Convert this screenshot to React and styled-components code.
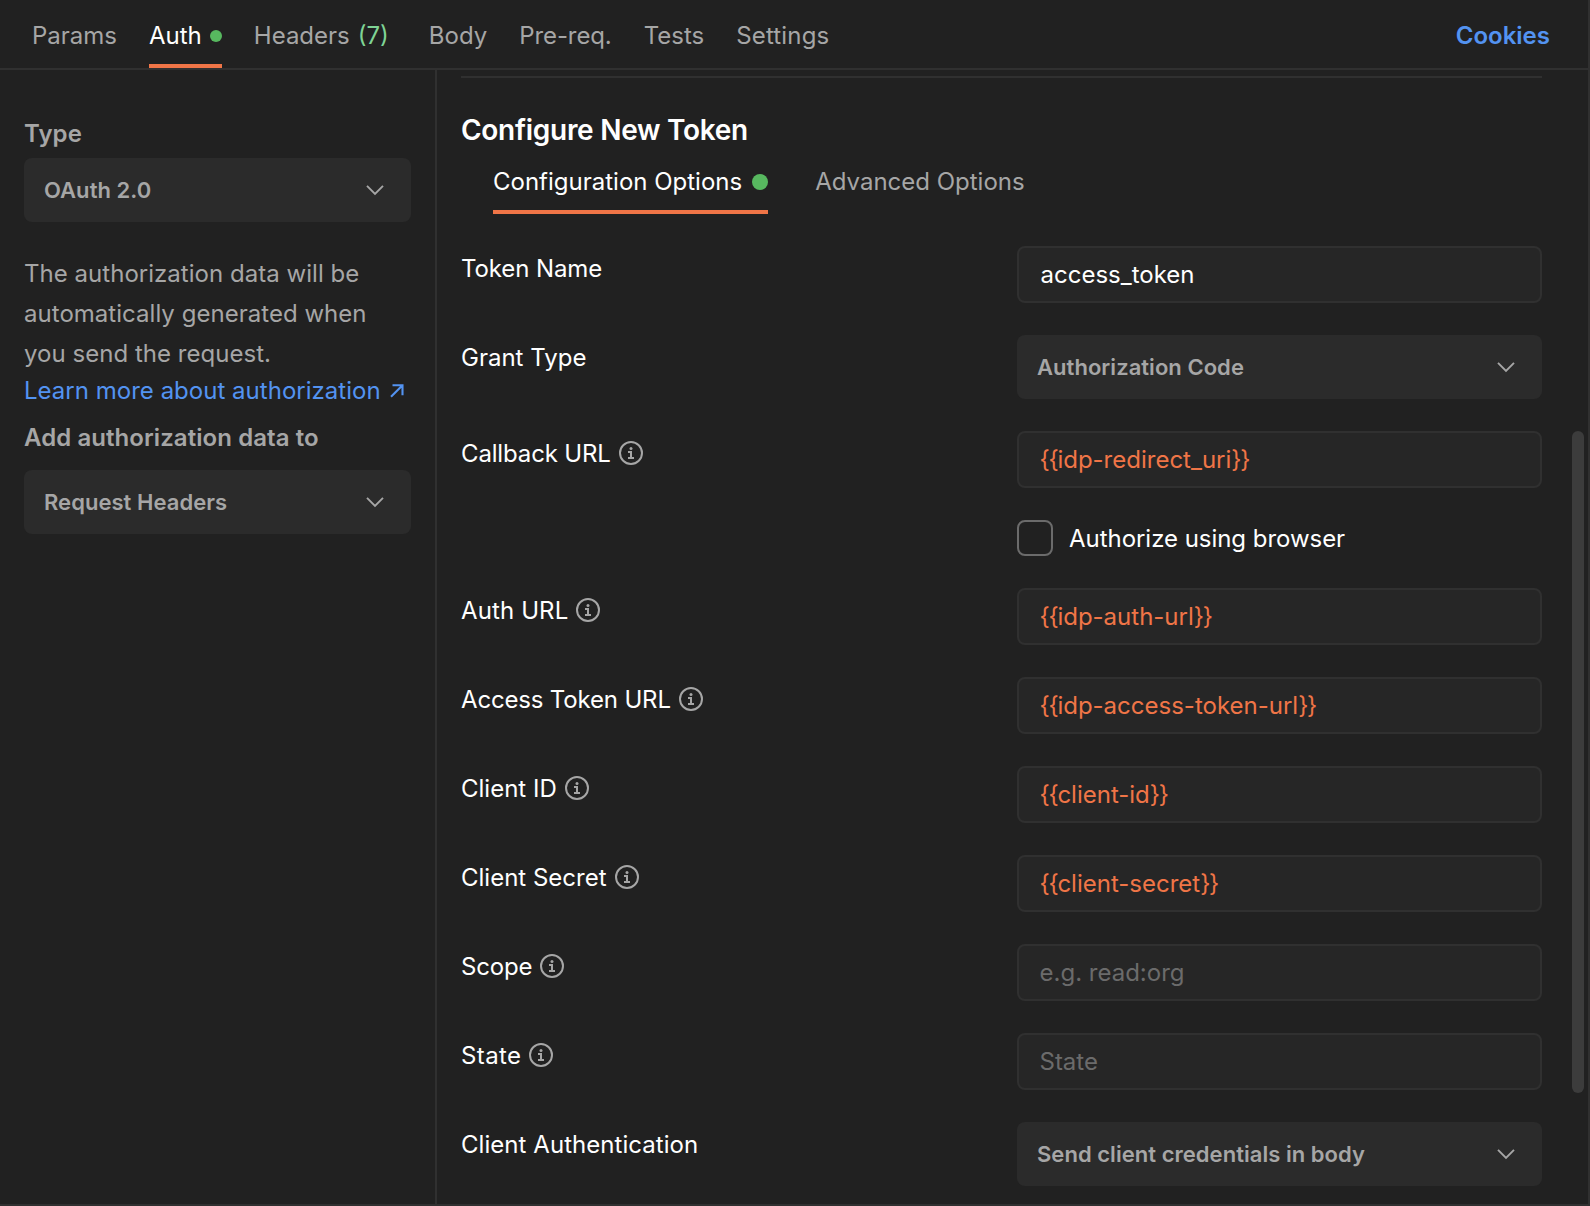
import React from "react";
import styled, { createGlobalStyle } from "styled-components";

const Global = createGlobalStyle`
  * { box-sizing: border-box; }
  body {
    margin: 0;
    background: #212121;
    font-family: Inter, "Liberation Sans", sans-serif;
    font-size: 24px;
    line-height: 24px;
    -webkit-font-smoothing: antialiased;
  }
`;

const Page = styled.div`
  display: flex;
  flex-direction: column;
  width: 1590px;
  height: 1206px;
  overflow: hidden;
  border-right: 2px solid #303030;
  border-bottom: 2px solid #303030;
  background: #212121;
  color: #fff;
`;

const TopBar = styled.nav`
  display: flex;
  flex: none;
  gap: 32px;
  height: 70px;
  padding: 0 38px 0 32px;
  border-bottom: 2px solid #303030;
`;

const Tab = styled.div`
  display: flex;
  align-items: center;
  gap: 8px;
  height: 68px;
  padding-top: ${(p) => (p.$active ? 7 : 3)}px;
  border-bottom: ${(p) => (p.$active ? "4px solid #f07547" : "0")};
  color: ${(p) => (p.$active ? "#fff" : "#a6a6a6")};
  letter-spacing: ${(p) => p.$track || 0}px;
  white-space: nowrap;
`;

const Count = styled.span`
  margin-right: 8px;
  color: #7fd495;
`;

const Dot = styled.span`
  width: ${(p) => p.$size}px;
  height: ${(p) => p.$size}px;
  border-radius: 50%;
  background: #57b85f;
`;

const Cookies = styled.a`
  margin-left: auto;
  padding-top: 24px;
  color: #5393f1;
  font-weight: 600;
`;

const Main = styled.div`
  display: flex;
  flex: 1;
  min-height: 0;
`;

const Sidebar = styled.aside`
  flex: none;
  width: 437px;
  padding: 52px 24px 0;
  border-right: 2px solid #303030;
  color: #a6a6a6;
`;

const SideLabel = styled.div`
  margin-bottom: ${(p) => p.$after}px;
  font-weight: 600;
  letter-spacing: 0.07px;
`;

const Description = styled.p`
  width: 380px;
  margin: 32px 0 0;
  line-height: 40px;
  letter-spacing: 0.03px;
`;

const LearnLink = styled.a`
  display: flex;
  align-items: center;
  gap: 9px;
  margin: 5px 0 23px;
  color: #5393f1;
  letter-spacing: 0.02px;
  white-space: nowrap;
`;

const SelectBox = styled.div`
  display: flex;
  align-items: center;
  justify-content: space-between;
  width: ${(p) => p.$width}px;
  height: 64px;
  padding: 0 26px 0 20px;
  border-radius: 8px;
  background: #2b2b2b;
  color: #a6a6a6;
  font-size: 22px;
  font-weight: 600;
  letter-spacing: 0.04px;
`;

const Content = styled.main`
  flex: 1;
  padding: 6px 46px 0 24px;
`;

const Heading = styled.h2`
  margin: 0;
  padding-top: 38px;
  border-top: 2px solid #303030;
  font-size: 28px;
  font-weight: 600;
  line-height: 28px;
  letter-spacing: -0.28px;
`;

const SubTabs = styled.div`
  display: flex;
  gap: 47px;
  margin-bottom: 32px;
  padding: 26px 0 0 32px;
`;

const SubTab = styled.div`
  display: flex;
  align-items: flex-start;
  gap: 10px;
  height: 44px;
  border-bottom: ${(p) => (p.$active ? "4px solid #f07547" : "0")};
  color: ${(p) => (p.$active ? "#fff" : "#a6a6a6")};

  ${Dot} { margin-top: 4px; }
`;

const Form = styled.div`
  display: flex;
  flex-direction: column;
  gap: 32px;
`;

const Row = styled.div`
  display: grid;
  grid-template-columns: 556px 525px;
`;

const Label = styled.div`
  display: flex;
  align-items: center;
  gap: 8px;
  height: 24px;
  margin-top: 10px;
`;

const LabelText = styled.span`
  padding-top: 2px;
  letter-spacing: ${(p) => p.$track || 0}px;
`;

const Field = styled.div`
  display: flex;
  align-items: center;
  height: 57px;
  padding: 1px 22px 0 ${(p) => (p.$kind === "value" ? 21.5 : 20.5)}px;
  border: 2px solid #303030;
  border-radius: 8px;
  background: #262626;
  color: ${(p) => ({ value: "#fff", variable: "#f07547", placeholder: "#6b6b6b" })[p.$kind]};
`;

const Brace = styled.span`
  letter-spacing: -1.3px;
`;

const CheckRow = styled.label`
  display: flex;
  grid-column: 2;
  align-items: center;
  gap: 16px;
  height: 36px;
  letter-spacing: -0.04px;
`;

const CheckText = styled.span`
  padding-top: 2px;
`;

const CheckBox = styled.span`
  width: 36px;
  height: 36px;
  border: 2px solid #6b6b6b;
  border-radius: 8px;
`;

const ScrollTrack = styled.div`
  flex: none;
  width: 16px;
  margin-left: -16px;
  padding-top: 361px;
`;

const ScrollThumb = styled.div`
  width: 12px;
  height: 662px;
  border-radius: 6px;
  background: #3c3c3c;
`;

const Icon = styled.svg`
  display: block;
  flex: none;
  fill: none;
`;

const Chevron = () => (
  <Icon width="20" height="12" viewBox="0 0 20 12" stroke="#a6a6a6" strokeWidth="1.9">
    <path d="M2 1.8 10 9.8 18 1.8" />
  </Icon>
);

const Info = () => (
  <Icon width="24" height="24" viewBox="0 0 24 24" stroke="#a6a6a6" strokeWidth="2">
    <circle cx="12" cy="12" r="11" />
    <path d="M9 11H12V17M9 17H15" />
    <circle cx="12" cy="7.5" r="1.5" fill="#a6a6a6" stroke="none" />
  </Icon>
);

const Arrow = () => (
  <Icon width="14" height="14" viewBox="0 0 14 14" stroke="#5393f1" strokeWidth="2.1">
    <path d="M2.5 1.2H12.5V11.2M12.5 1.2 1 12.7" />
  </Icon>
);

const Select = ({ width, children }) => (
  <SelectBox $width={width}>
    <span>{children}</span>
    <Chevron />
  </SelectBox>
);

const Variable = ({ name }) => (
  <span>
    <Brace>{"{{"}</Brace>
    {name}
    <Brace>{"}}"}</Brace>
  </span>
);

const FIELDS = [
  { label: "Token Name", track: -0.1, kind: "value", text: "access_token" },
  { label: "Grant Type", kind: "select", text: "Authorization Code" },
  { label: "Callback URL", track: -0.15, info: true, kind: "variable", text: "idp-redirect_uri" },
  { kind: "check", text: "Authorize using browser" },
  { label: "Auth URL", track: 0.12, info: true, kind: "variable", text: "idp-auth-url" },
  { label: "Access Token URL", track: -0.17, info: true, kind: "variable", text: "idp-access-token-url" },
  { label: "Client ID", info: true, kind: "variable", text: "client-id" },
  { label: "Client Secret", info: true, kind: "variable", text: "client-secret" },
  { label: "Scope", track: -0.2, info: true, kind: "placeholder", text: "e.g. read:org" },
  { label: "State", track: 0.4, info: true, kind: "placeholder", text: "State" },
  { label: "Client Authentication", track: 0.05, kind: "select", text: "Send client credentials in body" },
];

const FormRow = ({ label, track, info, kind, text }) => {
  if (kind === "check") {
    return (
      <Row>
        <CheckRow>
          <CheckBox />
          <CheckText>{text}</CheckText>
        </CheckRow>
      </Row>
    );
  }
  return (
    <Row>
      <Label>
        <LabelText $track={track}>{label}</LabelText>
        {info && <Info />}
      </Label>
      {kind === "select" ? (
        <Select width={525}>{text}</Select>
      ) : (
        <Field $kind={kind}>{kind === "variable" ? <Variable name={text} /> : <span>{text}</span>}</Field>
      )}
    </Row>
  );
};

export default function App() {
  return (
    <>
      <Global />
      <Page>
        <TopBar>
          <Tab>Params</Tab>
          <Tab $active><span>Auth</span><Dot $size={12} /></Tab>
          <Tab><span>Headers</span><Count>(7)</Count></Tab>
          <Tab>Body</Tab>
          <Tab $track={-0.1}>Pre-req.</Tab>
          <Tab>Tests</Tab>
          <Tab $track={0.15}>Settings</Tab>
          <Cookies>Cookies</Cookies>
        </TopBar>
        <Main>
          <Sidebar>
            <SideLabel $after={12}>Type</SideLabel>
            <Select width={387}>OAuth 2.0</Select>
            <Description>
              The authorization data will be automatically generated when you send the request.
            </Description>
            <LearnLink><span>Learn more about authorization</span><Arrow /></LearnLink>
            <SideLabel $after={20}>Add authorization data to</SideLabel>
            <Select width={387}>Request Headers</Select>
          </Sidebar>
          <Content>
            <Heading>Configure New Token</Heading>
            <SubTabs>
              <SubTab $active><span>Configuration Options</span><Dot $size={16} /></SubTab>
              <SubTab>Advanced Options</SubTab>
            </SubTabs>
            <Form>
              {FIELDS.map((f) => <FormRow key={f.text + f.kind} {...f} />)}
            </Form>
          </Content>
          <ScrollTrack><ScrollThumb /></ScrollTrack>
        </Main>
      </Page>
    </>
  );
}
